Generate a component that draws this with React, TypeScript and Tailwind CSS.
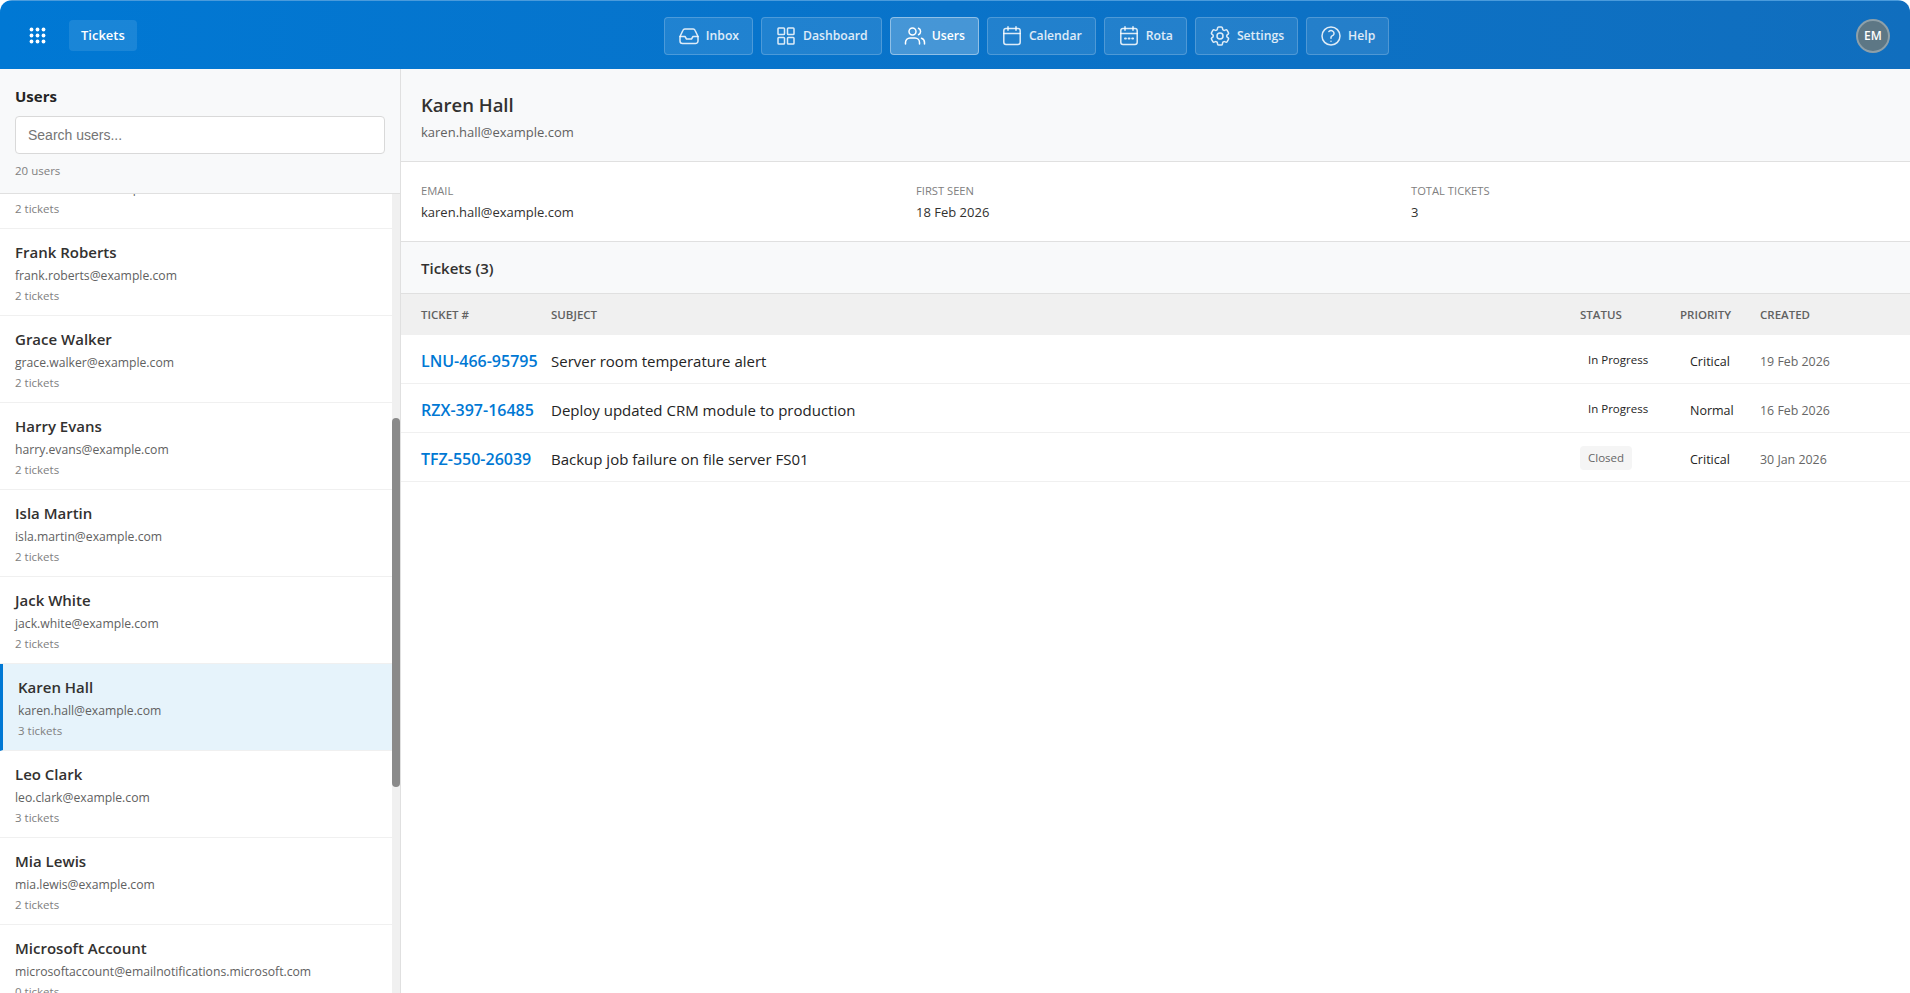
import { useEffect, useRef } from "react"
import { HiOutlineCog6Tooth, HiOutlineQuestionMarkCircle } from "react-icons/hi2"

type IconProps = { className?: string }

function Outline({ className, children }: IconProps & { children: React.ReactNode }) {
  return (
    <svg className={className} viewBox="0 0 24 24" fill="none" stroke="currentColor" strokeWidth={1.5} strokeLinecap="round" strokeLinejoin="round">
      {children}
    </svg>
  )
}

const InboxIcon = ({ className }: IconProps) => (
  <Outline className={className}>
    <path d="M3 12.5 6 6.2A2 2 0 0 1 7.8 5h8.4A2 2 0 0 1 18 6.2l3 6.3V17a2.5 2.5 0 0 1-2.5 2.5h-13A2.5 2.5 0 0 1 3 17Z" />
    <path d="M3 12.5h5l1.5 2.5h5l1.5-2.5h5" />
  </Outline>
)

const GridIcon = ({ className }: IconProps) => (
  <Outline className={className}>
    <rect x="4" y="4" width="6.5" height="6.5" rx="0.8" />
    <rect x="13.5" y="4" width="6.5" height="6.5" rx="0.8" />
    <rect x="4" y="13.5" width="6.5" height="6.5" rx="0.8" />
    <rect x="13.5" y="13.5" width="6.5" height="6.5" rx="0.8" />
  </Outline>
)

const PeopleIcon = ({ className }: IconProps) => (
  <Outline className={className}>
    <circle cx="9.5" cy="7.5" r="3.5" />
    <path d="M2.5 20v-1.5a4.5 4.5 0 0 1 4.5-4.5h5a4.5 4.5 0 0 1 4.5 4.5V20" />
    <path d="M15.5 4.3a3.5 3.5 0 0 1 0 6.4" />
    <path d="M18.5 14.2a4.5 4.5 0 0 1 3 4.3V20" />
  </Outline>
)

const CalendarIcon = ({ className }: IconProps) => (
  <Outline className={className}>
    <path d="M8 2.8v3.4M16 2.8v3.4M3.8 9.5h16.4" />
    <rect x="3.8" y="4.5" width="16.4" height="16" rx="2.2" />
  </Outline>
)

const RotaIcon = ({ className }: IconProps) => (
  <Outline className={className}>
    <path d="M8 2.8v3.4M16 2.8v3.4M3.8 9.5h16.4" />
    <rect x="3.8" y="4.5" width="16.4" height="16" rx="2.2" />
    <path d="M8 14.5h.9M11.6 14.5h.9M15.2 14.5h.9" strokeWidth={2} />
  </Outline>
)

const navItems = [
  { label: "Inbox", icon: InboxIcon },
  { label: "Dashboard", icon: GridIcon },
  { label: "Users", icon: PeopleIcon, active: true },
  { label: "Calendar", icon: CalendarIcon },
  { label: "Rota", icon: RotaIcon },
  { label: "Settings", icon: HiOutlineCog6Tooth },
  { label: "Help", icon: HiOutlineQuestionMarkCircle },
]

const users = [
  { name: "Alice Johnson", email: "alice.johnson@example.com", tickets: 2 },
  { name: "Ben Carter", email: "ben.carter@example.com", tickets: 3 },
  { name: "Chloe Davis", email: "chloe.davis@example.com", tickets: 2 },
  { name: "Daniel Moore", email: "daniel.moore@example.com", tickets: 2 },
  { name: "Diana Green", email: "diana.green@example.com", tickets: 1 },
  { name: "Emma Wilson", email: "emma.wilson@example.com", tickets: 2 },
  { name: "Frank Roberts", email: "frank.roberts@example.com", tickets: 2 },
  { name: "Grace Walker", email: "grace.walker@example.com", tickets: 2 },
  { name: "Harry Evans", email: "harry.evans@example.com", tickets: 2 },
  { name: "Isla Martin", email: "isla.martin@example.com", tickets: 2 },
  { name: "Jack White", email: "jack.white@example.com", tickets: 2 },
  { name: "Karen Hall", email: "karen.hall@example.com", tickets: 3, selected: true },
  { name: "Leo Clark", email: "leo.clark@example.com", tickets: 3 },
  { name: "Mia Lewis", email: "mia.lewis@example.com", tickets: 2 },
  { name: "Microsoft Account", email: "microsoftaccount@emailnotifications.microsoft.com", tickets: 0 },
  { name: "Noah Scott", email: "noah.scott@example.com", tickets: 2 },
  { name: "Olivia King", email: "olivia.king@example.com", tickets: 2 },
  { name: "Paul Wright", email: "paul.wright@example.com", tickets: 2 },
  { name: "Quinn Adams", email: "quinn.adams@example.com", tickets: 1 },
  { name: "Ruby Baker", email: "ruby.baker@example.com", tickets: 2 },
]

const tickets = [
  { id: "LNU-466-95795", subject: "Server room temperature alert", status: "In Progress", priority: "Critical", created: "19 Feb 2026" },
  { id: "RZX-397-16485", subject: "Deploy updated CRM module to production", status: "In Progress", priority: "Normal", created: "16 Feb 2026" },
  { id: "TFZ-550-26039", subject: "Backup job failure on file server FS01", status: "Closed", priority: "Critical", created: "30 Jan 2026" },
]

function AppsIcon() {
  const dots = [3.5, 9.5, 15.5]
  return (
    <svg className="size-[19px]" viewBox="0 0 19 19" fill="white">
      {dots.map((y) => dots.map((x) => <circle key={`${x}-${y}`} cx={x} cy={y} r={1.9} />))}
    </svg>
  )
}

export default function App() {
  const listRef = useRef<HTMLDivElement>(null)

  useEffect(() => {
    if (listRef.current) listRef.current.scrollTop = 487
  }, [])

  return (
    <div className="h-[993px] flex flex-col overflow-hidden rounded-xl bg-white text-[#323130] font-['Open_Sans',sans-serif]">
      <header className="h-[69px] shrink-0 flex items-center pl-[28px] pr-5 pt-px bg-gradient-to-r from-[#0078d4] to-[#106ebe] border-t border-[#4a9bdc]">
        <AppsIcon />
        <span className="ml-[22px] h-[31px] px-3 pt-px flex items-center rounded bg-white/10 text-white text-[13px] font-semibold">Tickets</span>
        <nav className="ml-[527px] flex gap-2">
          {navItems.map((item) => (
            <button
              key={item.label}
              className={`h-[38px] pl-3 pr-[13px] flex items-center gap-[5px] rounded border text-[12.2px] font-semibold ${
                item.active ? "bg-white/25 border-white/40 text-white" : "bg-white/10 border-white/20 text-white/85"
              }`}
            >
              <item.icon className="size-6" />
              <span className="pt-px">{item.label}</span>
            </button>
          ))}
        </nav>
        <div className="ml-auto size-[34px] rounded-full bg-[#5d7785] border-2 border-white/30 flex items-center justify-center text-white text-xs font-semibold">
          EM
        </div>
      </header>

      <div className="flex-1 flex min-h-0">
        <aside className="w-[401px] shrink-0 flex flex-col border-r border-[#e0e0e0]">
          <div className="h-[125px] shrink-0 bg-[#f8f9fa] border-b border-[#e0e0e0] px-[15px] pt-[17px]">
            <h2 className="text-[15px] leading-[21px] font-bold text-[#242424]">Users</h2>
            <input
              placeholder="Search users..."
              className="block mt-[9px] w-full h-[38px] px-3 rounded border border-[#d9d9d9] bg-white text-sm font-['Liberation_Sans',sans-serif] placeholder:text-[#757575]"
            />
            <p className="mt-[9px] text-[11.5px] leading-[16px] text-[#808080]">20 users</p>
          </div>
          <div className="flex-1 flex min-h-0">
            <div ref={listRef} className="flex-1 min-w-0 overflow-hidden">
              {users.map((user) => (
                <div
                  key={user.email}
                  className={`h-[87px] pt-[12px] pl-[15px] border-b border-[#f0f0f0] ${
                    user.selected ? "bg-[#e6f3fb] border-l-[3px] border-l-[#0078d4]" : ""
                  }`}
                >
                  <div className="text-[15px] leading-[22px] font-semibold text-[#323130]">{user.name}</div>
                  <div className="text-[12.2px] leading-[21px] mt-[2px] text-[#616161]">{user.email}</div>
                  <div className="text-[11.5px] leading-[20px] text-[#808080]">{user.tickets} tickets</div>
                </div>
              ))}
            </div>
            <div className="w-2 shrink-0 bg-[#f0f0f0]">
              <div className="mt-[224px] h-[369px] rounded bg-[#8a8a8a]" />
            </div>
          </div>
        </aside>

        <main className="flex-1 min-w-0">
          <div className="h-[93px] bg-[#f8f9fa] border-b border-[#e0e0e0] px-5 pt-[21px]">
            <h1 className="text-[18.5px] leading-[30px] font-semibold text-[#323130]">Karen Hall</h1>
            <p className="text-[13px] mt-[3px] text-[#616161]">karen.hall@example.com</p>
          </div>
          <div className="h-[80px] grid grid-cols-3 gap-4 px-5 pt-[21px] border-b border-[#e0e0e0]">
            {[
              ["Email", "karen.hall@example.com"],
              ["First Seen", "18 Feb 2026"],
              ["Total Tickets", "3"],
            ].map(([label, value]) => (
              <div key={label}>
                <div className="text-[11.2px] leading-[16px] uppercase text-[#808080]">{label}</div>
                <div className="text-[13px] leading-[20px] mt-[3px] text-[#323130]">{value}</div>
              </div>
            ))}
          </div>
          <div className="h-[52px] bg-[#f8f9fa] border-b border-[#e0e0e0] px-5 pt-[1px] flex items-center text-[15px] font-semibold">Tickets (3)</div>
          <table className="w-full border-separate border-spacing-0 table-fixed">
            <thead>
              <tr className="h-[41px] bg-[#f0f0f0] text-left text-[11.5px] uppercase text-[#616161]">
                <th className="w-[150px] pl-5 font-semibold">Ticket #</th>
                <th className="font-semibold">Subject</th>
                <th className="w-[100px] font-semibold">Status</th>
                <th className="w-[80px] font-semibold">Priority</th>
                <th className="w-[150px] font-semibold">Created</th>
              </tr>
            </thead>
            <tbody>
              {tickets.map((ticket) => (
                <tr key={ticket.id} className="h-[49px]">
                  <td className="pl-5 pt-1 border-b border-[#f0f0f0] text-base font-semibold text-[#0078d4]">{ticket.id}</td>
                  <td className="pt-1 border-b border-[#f0f0f0] text-[15px] text-[#242424]">{ticket.subject}</td>
                  <td className="border-b border-[#f0f0f0]">
                    <span className={`inline-block px-2 py-1 leading-[16px] rounded text-[11.5px] ${ticket.status === "Closed" ? "bg-[#f5f5f5] text-[#666666]" : "text-[#242424]"}`}>
                      {ticket.status}
                    </span>
                  </td>
                  <td className="pl-[10px] pt-[6px] border-b border-[#f0f0f0] text-[12.5px] text-[#242424]">{ticket.priority}</td>
                  <td className="pt-[6px] border-b border-[#f0f0f0] text-[12.4px] text-[#666666]">{ticket.created}</td>
                </tr>
              ))}
            </tbody>
          </table>
        </main>
      </div>
    </div>
  )
}
